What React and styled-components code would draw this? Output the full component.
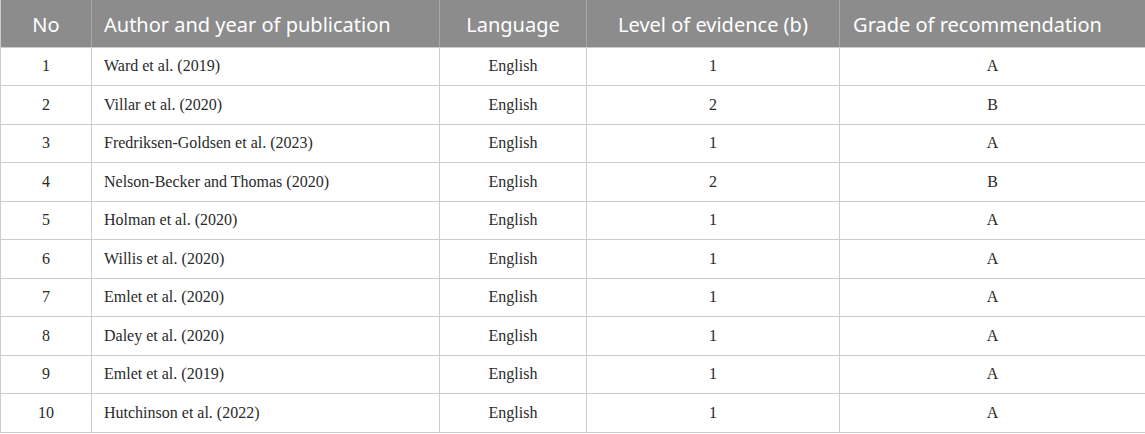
import styled, { createGlobalStyle } from "styled-components";

const GlobalStyle = createGlobalStyle`
  body {
    margin: 0;
    background: #ffffff;
  }
`;

const rows = [
  ["1", "Ward et al. (2019)", "English", "1", "A"],
  ["2", "Villar et al. (2020)", "English", "2", "B"],
  ["3", "Fredriksen-Goldsen et al. (2023)", "English", "1", "A"],
  ["4", "Nelson-Becker and Thomas (2020)", "English", "2", "B"],
  ["5", "Holman et al. (2020)", "English", "1", "A"],
  ["6", "Willis et al. (2020)", "English", "1", "A"],
  ["7", "Emlet et al. (2020)", "English", "1", "A"],
  ["8", "Daley et al. (2020)", "English", "1", "A"],
  ["9", "Emlet et al. (2019)", "English", "1", "A"],
  ["10", "Hutchinson et al. (2022)", "English", "1", "A"],
];

const columns = [
  { title: "No", width: 91, align: "center" },
  { title: "Author and year of publication", width: 348, align: "left" },
  { title: "Language", width: 147, align: "center" },
  { title: "Level of evidence (b)", width: 253, align: "center" },
  { title: "Grade of recommendation", width: 306, align: "center" },
];

export default function App() {
  return (
    <>
      <GlobalStyle />
      <Table>
        <colgroup>
          {columns.map((c) => (
            <col key={c.title} style={{ width: c.width }} />
          ))}
        </colgroup>
        <thead>
          <HeadRow>
            {columns.map((c) => (
              <HeadCell key={c.title} $align={c.align}>
                {c.title}
              </HeadCell>
            ))}
          </HeadRow>
        </thead>
        <tbody>
          {rows.map((r) => (
            <Row key={r[0]}>
              {r.map((v, i) => (
                <Cell key={i} $align={columns[i].align}>
                  {v}
                </Cell>
              ))}
            </Row>
          ))}
        </tbody>
      </Table>
    </>
  );
}

const Table = styled.table`
  width: 1145px;
  table-layout: fixed;
  border-collapse: collapse;
  border: 1px solid #cccccc;
  border-top: none;
`;

const HeadRow = styled.tr`
  height: 47px;
`;

const HeadCell = styled.th`
  background: #8c8c8c;
  color: #ffffff;
  font-family: "Noto Sans", "Open Sans", sans-serif;
  font-weight: 400;
  font-size: 20px;
  line-height: 24px;
  padding: 3px 12px 0;
  text-align: ${(p) => p.$align};
  border-left: 1px solid #a8a8a8;
  border-bottom: 1px solid #cccccc;
  &:first-child {
    border-left: none;
  }
  &:last-child {
    padding-right: 42px;
  }
`;

const Row = styled.tr`
  height: 38.5px;
`;

const Cell = styled.td`
  font-family: "Liberation Serif", "Times New Roman", serif;
  font-size: 16px;
  line-height: 20px;
  color: #2a2a2a;
  padding: 0 12px;
  text-align: ${(p) => p.$align};
  border: 1px solid #cccccc;
`;
